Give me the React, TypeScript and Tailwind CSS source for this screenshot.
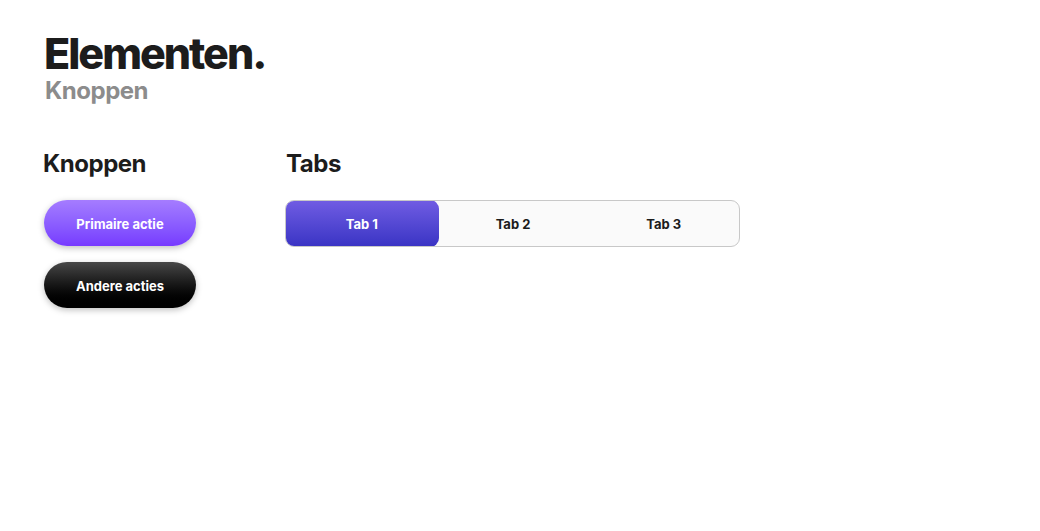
export default function App() {
  const font = { fontFamily: 'Inter, "Noto Sans", sans-serif' };
  return (
    <div className="min-h-screen bg-white text-[#1c1c1c]" style={font}>
      <div className="pl-[44px] pt-[31px]">
        <h1 className="text-[43px] font-extrabold leading-[44px] tracking-[-0.047em] text-[#1c1c1c]">Elementen.</h1>
        <h2 className="text-[24px] font-bold leading-[28px] tracking-[-0.02em] text-[#8c8c8c] mt-[2px] ml-[1px]">Knoppen</h2>
        <div className="flex mt-[44px]">
          <div className="w-[243px] -ml-[1px]">
            <h3 className="text-[24px] font-bold leading-[30px] tracking-[-0.02em]">Knoppen</h3>
            <div className="flex flex-col gap-[16px] mt-[21px] ml-[1px]">
              <button className="w-[152px] h-[46px] pt-[3px] rounded-full bg-gradient-to-b from-[#a57cff] to-[#7739ff] text-white text-[13px] font-bold shadow-[0_2px_6px_rgba(0,0,0,0.25)]">Primaire actie</button>
              <button className="w-[152px] h-[46px] pt-[3px] rounded-full bg-gradient-to-b from-[#484848] to-[#000000] text-white text-[13px] font-bold shadow-[0_2px_6px_rgba(0,0,0,0.25)]">Andere acties</button>
            </div>
          </div>
          <div>
            <h3 className="text-[24px] font-bold leading-[30px] tracking-[-0.02em]">Tabs</h3>
            <div className="mt-[21px] -ml-[1px] flex w-[455px] h-[47px] rounded-[9px] border border-[#c8c8c8] bg-[#fafafa] overflow-hidden">
              <div className="-m-[1px] w-[154px] h-[47px] pt-[3px] rounded-[9px] bg-gradient-to-b from-[#715ce3] to-[#3a33c4] text-white flex items-center justify-center text-[13px] font-bold">Tab 1</div>
              <div className="w-[151px] pt-[3px] flex items-center justify-center text-[13px] font-bold">Tab 2</div>
              <div className="w-[151px] pt-[3px] flex items-center justify-center text-[13px] font-bold">Tab 3</div>
            </div>
          </div>
        </div>
      </div>
    </div>
  );
}
